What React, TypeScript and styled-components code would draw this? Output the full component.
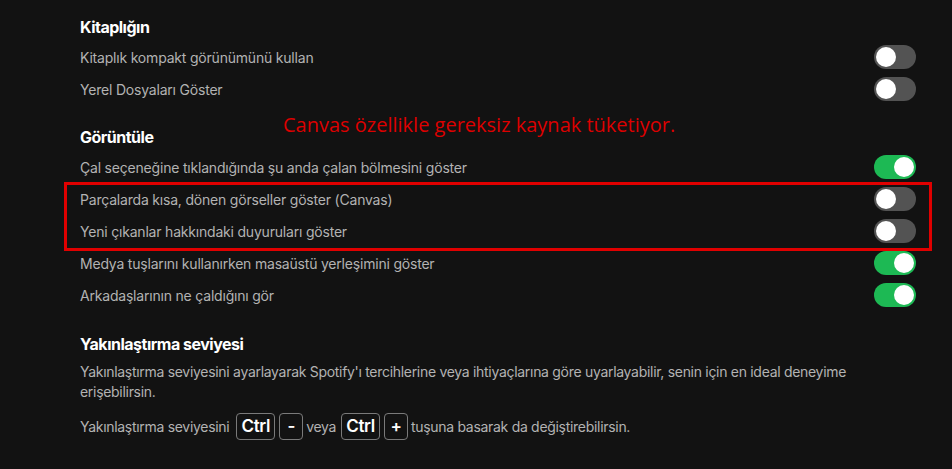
import React from "react";
import styled, { createGlobalStyle } from "styled-components";

const Global = createGlobalStyle`
  html, body { margin: 0; padding: 0; background: #121212; }
  body { font-family: Inter, "Noto Sans", sans-serif; -webkit-font-smoothing: antialiased; }
`;

const Page = styled.div`
  position: relative;
  width: 952px;
  height: 469px;
  box-sizing: border-box;
  padding: 15px 36px 0 80px;
  background: #121212;
  overflow: hidden;
`;

const Section = styled.section<{ $gap?: number }>`
  display: flex;
  flex-direction: column;
  margin-top: ${(p) => p.$gap ?? 0}px;
`;

const Heading = styled.h2`
  margin: 0 0 2px;
  height: 24px;
  line-height: 24px;
  font-size: 16px;
  font-weight: 700;
  letter-spacing: -0.5px;
  color: #ffffff;
`;

const Row = styled.div`
  display: flex;
  align-items: center;
  justify-content: space-between;
  height: 32px;
`;

const Label = styled.span`
  font-size: 14px;
  letter-spacing: -0.2px;
  color: #b3b3b3;
`;

const Switch = styled.span<{ $on?: boolean }>`
  position: relative;
  display: block;
  width: 42px;
  height: 24px;
  border-radius: 12px;
  background: ${(p) => (p.$on ? "#1db954" : "#535353")};
  &::after {
    content: "";
    position: absolute;
    top: 2px;
    left: ${(p) => (p.$on ? "20px" : "2px")};
    width: 20px;
    height: 20px;
    border-radius: 50%;
    background: #ffffff;
  }
`;

const Highlight = styled.div`
  position: relative;
  &::after {
    content: "";
    position: absolute;
    left: -16px;
    right: -16px;
    top: -1px;
    bottom: -4px;
    border: 3px solid #e00000;
    pointer-events: none;
  }
`;

const Note = styled.div`
  position: absolute;
  left: 283px;
  top: 111px;
  font-family: "Open Sans", "Noto Sans", sans-serif;
  font-size: 20px;
  line-height: 28px;
  color: #dd0000;
  white-space: nowrap;
`;

const Para = styled.p`
  margin: 4px 0 0;
  font-size: 14px;
  line-height: 20px;
  letter-spacing: -0.3px;
  color: #b3b3b3;
`;

const KeyLine = styled.div`
  display: flex;
  align-items: center;
  margin-top: 10px;
  height: 28px;
  font-size: 14px;
  letter-spacing: -0.3px;
  color: #b3b3b3;
`;

const Words = styled.span<{ $l?: number; $r?: number }>`
  margin: 0 ${(p) => p.$r ?? 0}px 0 ${(p) => p.$l ?? 0}px;
`;

const Key = styled.kbd<{ $gap?: number }>`
  display: inline-flex;
  align-items: center;
  justify-content: center;
  box-sizing: border-box;
  min-width: 24px;
  height: 27px;
  margin-left: ${(p) => p.$gap ?? 0}px;
  padding: 0 4px;
  border: 1px solid #7a7a7a;
  border-radius: 4px;
  font-family: Inter, "Noto Sans", sans-serif;
  font-size: 17px;
  font-weight: 600;
  letter-spacing: -0.3px;
  color: #ffffff;
`;

const ToggleRow = ({ label, on }: { label: string; on?: boolean }) => (
  <Row>
    <Label>{label}</Label>
    <Switch $on={on} />
  </Row>
);

export default function App() {
  return (
    <>
      <Global />
      <Page>
        <Section>
          <Heading>Kitaplığın</Heading>
          <ToggleRow label="Kitaplık kompakt görünümünü kullan" />
          <ToggleRow label="Yerel Dosyaları Göster" />
        </Section>
        <Section $gap={20}>
          <Heading>Görüntüle</Heading>
          <ToggleRow on label="Çal seçeneğine tıklandığında şu anda çalan bölmesini göster" />
          <Highlight>
            <ToggleRow label="Parçalarda kısa, dönen görseller göster (Canvas)" />
            <ToggleRow label="Yeni çıkanlar hakkındaki duyuruları göster" />
          </Highlight>
          <ToggleRow on label="Medya tuşlarını kullanırken masaüstü yerleşimini göster" />
          <ToggleRow on label="Arkadaşlarının ne çaldığını gör" />
        </Section>
        <Section $gap={21}>
          <Heading>Yakınlaştırma seviyesi</Heading>
          <Para>
            Yakınlaştırma seviyesini ayarlayarak Spotify'ı tercihlerine veya ihtiyaçlarına göre uyarlayabilir, senin için en ideal deneyime erişebilirsin.
          </Para>
          <KeyLine>
            <Words>Yakınlaştırma seviyesini</Words>
            <Key $gap={7}>Ctrl</Key>
            <Key $gap={4}>-</Key>
            <Words $l={3} $r={5}>veya</Words>
            <Key>Ctrl</Key>
            <Key $gap={4}>+</Key>
            <Words $l={3}>tuşuna basarak da değiştirebilirsin.</Words>
          </KeyLine>
        </Section>
        <Note>Canvas özellikle gereksiz kaynak tüketiyor.</Note>
      </Page>
    </>
  );
}
